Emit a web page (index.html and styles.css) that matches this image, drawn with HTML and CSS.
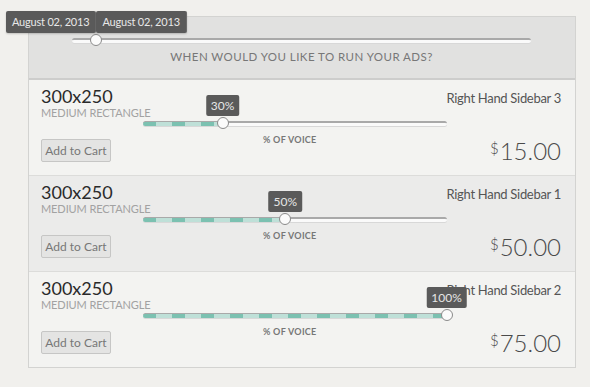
FILE: index.html
```html
<!DOCTYPE html>
<html lang="en">

<head>
  <meta charset="UTF-8">
  <title>Ad Planner</title>
  <link rel="stylesheet" href="styles.css">
</head>

<body>
  <div class="planner">
    <div class="date-tips">
      <span class="date-tip">August 02, 2013</span>
      <span class="date-tip">August 02, 2013</span>
    </div>

    <div class="schedule">
      <div class="track schedule-track">
        <span class="handle" style="left: 5.2%"></span>
      </div>
      <p class="schedule-label">When would you like to run your ads?</p>
    </div>

    <div class="ad-row">
      <div class="ad-info">
        <div class="ad-name">300x250</div>
        <div class="ad-type">Medium Rectangle</div>
        <button class="cart-btn">Add to Cart</button>
      </div>
      <div class="voice">
        <div class="track">
          <span class="fill" style="width: 26.2%"></span>
          <span class="handle" style="left: 26.2%"></span>
          <span class="tip" style="left: 26.2%">30%</span>
        </div>
        <div class="voice-label">% OF VOICE</div>
      </div>
      <div class="ad-side">
        <div class="placement">Right Hand Sidebar 3</div>
        <div class="price"><sup>$</sup>15.00</div>
      </div>
    </div>

    <div class="ad-row alt">
      <div class="ad-info">
        <div class="ad-name">300x250</div>
        <div class="ad-type">Medium Rectangle</div>
        <button class="cart-btn">Add to Cart</button>
      </div>
      <div class="voice">
        <div class="track">
          <span class="fill" style="width: 46.9%"></span>
          <span class="handle" style="left: 46.9%"></span>
          <span class="tip" style="left: 46.9%">50%</span>
        </div>
        <div class="voice-label">% OF VOICE</div>
      </div>
      <div class="ad-side">
        <div class="placement">Right Hand Sidebar 1</div>
        <div class="price"><sup>$</sup>50.00</div>
      </div>
    </div>

    <div class="ad-row">
      <div class="ad-info">
        <div class="ad-name">300x250</div>
        <div class="ad-type">Medium Rectangle</div>
        <button class="cart-btn">Add to Cart</button>
      </div>
      <div class="voice">
        <div class="track">
          <span class="fill" style="width: 100%"></span>
          <span class="handle" style="left: 100%"></span>
          <span class="tip" style="left: 100%">100%</span>
        </div>
        <div class="voice-label">% OF VOICE</div>
      </div>
      <div class="ad-side">
        <div class="placement">Right Hand Sidebar 2</div>
        <div class="price"><sup>$</sup>75.00</div>
      </div>
    </div>
  </div>
</body>

</html>
```

FILE: styles.css
```css
body {
  font-family: Lato, "Liberation Sans", sans-serif;
  margin: 0;
  padding: 16px 0 0 28px;
  background-color: #f1f0ed;
  color: #333;
}

.planner {
  position: relative;
  width: 546px;
  border: 1px solid #d3d3d1;
  background-color: #f3f3f1;
}

/* date tooltips above the schedule slider */
.date-tips {
  position: absolute;
  left: -23px;
  top: -6px;
  display: flex;
  z-index: 5;
}

.date-tip {
  background-color: #5a5a5a;
  color: #e8e8e8;
  font-size: 11px;
  letter-spacing: -0.2px;
  line-height: 18px;
  padding: 2px 6px;
  border-radius: 2px;
  border-right: 1px solid #6c6c6c;
  box-shadow: 0 1px 2px rgba(0, 0, 0, 0.2);
}

.schedule {
  background-color: #e1e1e0;
  border-bottom: 2px solid #cdcdcc;
  padding: 21px 44px 0 43px;
  box-sizing: border-box;
  height: 63px;
}

.schedule-label {
  margin: 7px 0 0;
  text-align: center;
  text-transform: uppercase;
  font-size: 11.5px;
  letter-spacing: 0.45px;
  color: #777;
}

/* slider */
.track {
  position: relative;
  height: 3px;
  background-color: #fafafa;
  border-top: 2px solid #a9a9a9;
  border-radius: 3px;
  box-shadow: 0 1px 0 #d8d8d8;
}

.fill {
  position: absolute;
  left: 0;
  top: -1px;
  height: 4px;
  border-radius: 2px;
  background: repeating-linear-gradient(90deg, #7cc1b1 0 13px, #bfe0d8 13px 29px);
}

.handle {
  position: absolute;
  top: -6px;
  width: 10px;
  height: 10px;
  margin-left: -6px;
  border-radius: 50%;
  background-color: #fbfbfb;
  border: 1px solid #8a8a8a;
  z-index: 2;
}

.tip {
  position: absolute;
  bottom: 10px;
  transform: translateX(-50%);
  background-color: #5a5a5a;
  color: #e6e6e6;
  font-size: 12px;
  line-height: 17px;
  padding: 2px 5px;
  border-radius: 2px;
  white-space: nowrap;
  z-index: 4;
}

/* ad rows */
.ad-row {
  display: flex;
  height: 95px;
  padding: 0 14px 0 12px;
  border-bottom: 1px solid #dcdcda;
}

.ad-row:last-child {
  border-bottom: none;
}

.ad-row.alt {
  background-color: #ebebea;
}

.ad-info {
  display: flex;
  flex-direction: column;
  align-items: flex-start;
  width: 102px;
  white-space: nowrap;
}

.ad-name {
  margin-top: 7px;
  font-size: 18px;
  line-height: 19px;
  color: #2a2a2a;
}

.ad-type {
  margin-top: 1px;
  font-size: 11px;
  line-height: 12px;
  text-transform: uppercase;
  letter-spacing: -0.1px;
  color: #a2a2a2;
}

.cart-btn {
  margin-top: auto;
  margin-bottom: 13px;
  height: 23px;
  width: 70px;
  padding: 0;
  font-family: inherit;
  font-size: 12px;
  color: #777;
  background-color: #e4e4e3;
  border: 1px solid #c6c6c5;
  border-radius: 2px;
}

.voice {
  width: 305px;
  padding-top: 41px;
}

.voice-label {
  margin-top: 8px;
  text-align: center;
  font-size: 9px;
  line-height: 11px;
  font-weight: bold;
  letter-spacing: 0.3px;
  color: #777;
  padding-right: 10px;
}

.ad-side {
  flex: 1;
  display: flex;
  flex-direction: column;
  align-items: flex-end;
  white-space: nowrap;
}

.placement {
  margin-top: 10px;
  font-size: 13px;
  line-height: 16px;
  letter-spacing: -0.3px;
  color: #555;
}

.price {
  margin-top: auto;
  margin-bottom: 11px;
  font-size: 24px;
  line-height: 26px;
  font-weight: 300;
  color: #4a4a4a;
}

.price sup {
  font-size: 15px;
  vertical-align: 6px;
  line-height: 0;
  margin-right: 1px;
}
```
